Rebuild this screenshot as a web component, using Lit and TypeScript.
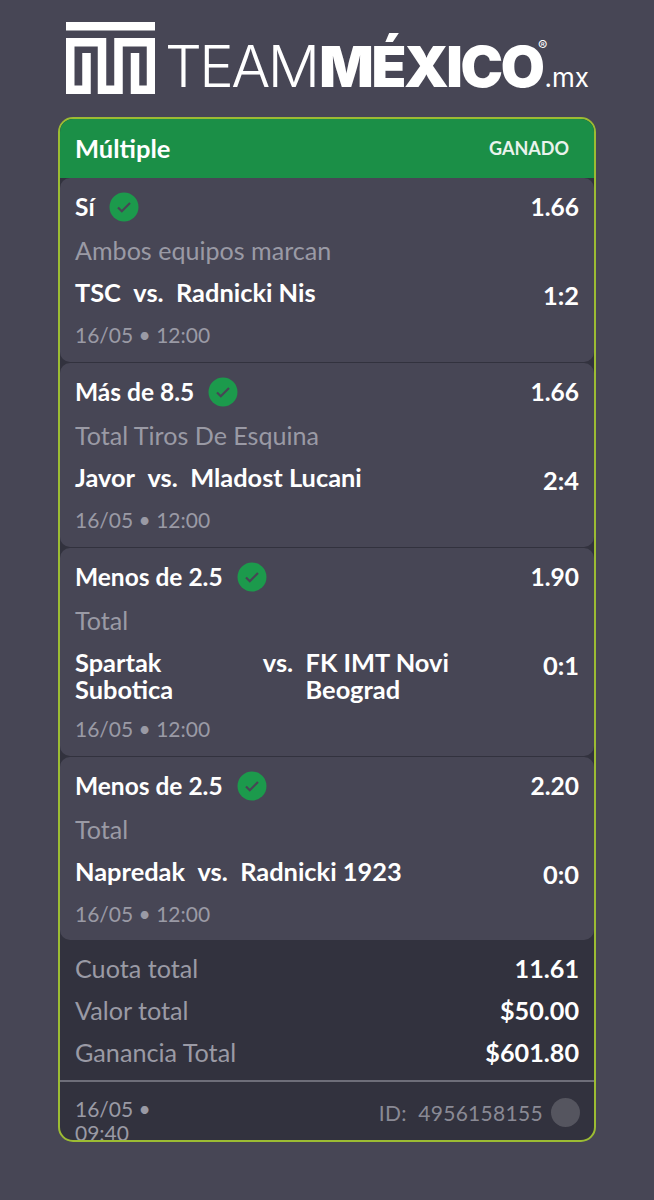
import { LitElement, html, css } from "lit";
import { customElement } from "lit/decorators.js";

interface Leg { pick: string; odds: string; market: string; home: string; away: string; score: string; }

const LEGS: Leg[] = [
  { pick: "Sí", odds: "1.66", market: "Ambos equipos marcan", home: "TSC", away: "Radnicki Nis", score: "1:2" },
  { pick: "Más de 8.5", odds: "1.66", market: "Total Tiros De Esquina", home: "Javor", away: "Mladost Lucani", score: "2:4" },
  { pick: "Menos de 2.5", odds: "1.90", market: "Total", home: "Spartak Subotica", away: "FK IMT Novi Beograd", score: "0:1" },
  { pick: "Menos de 2.5", odds: "2.20", market: "Total", home: "Napredak", away: "Radnicki 1923", score: "0:0" },
];

@customElement("app-root")
export class AppRoot extends LitElement {
  static styles = css`
    :host { display: block; width: 654px; height: 1200px; overflow: hidden; background: #474655; font-family: Lato, "Liberation Sans", sans-serif; color: #fff; }
    .logo { height: 117px; box-sizing: border-box; display: flex; align-items: flex-start; padding-left: 66px; padding-top: 22px; position: relative; }
    .logo svg { flex: none; width: 89px; height: 72px; display: block; }
    .word { display: flex; align-items: baseline; margin-left: 10px; margin-top: 14px; line-height: 60px; white-space: nowrap; font-family: Inter, Lato, sans-serif; font-size: 58px; }
    .thin { font-weight: 300; letter-spacing: -2.6px; }
    .heavy { font-weight: 900; letter-spacing: -2.4px; font-size: 57px; margin-left: 2px; }
    .mx { font-weight: 400; font-size: 26px; letter-spacing: 0; margin-left: 2px; }
    .reg { position: absolute; left: 538px; top: 38px; font-size: 14px; line-height: 16px; font-family: Inter, sans-serif; }
    .card { margin: 0 58px; box-sizing: border-box; height: 1025px; border: 2px solid #9cbc33; border-radius: 15px; overflow: hidden; background: #32323e; }
    .head { height: 59px; box-sizing: border-box; padding: 0 25px 2px 15px; background: #1b8f47; display: flex; align-items: center; justify-content: space-between; }
    .head .type { font-size: 25.5px; font-weight: 700; }
    .head .status { font-size: 18px; font-weight: 700; color: #e9f3ec; }
    .legs { display: flex; flex-direction: column; gap: 1px; }
    .leg { background: #474655; border-radius: 10px; padding: 14px 15px 13px; }
    .leg:last-child { padding-bottom: 12px; }
    .top { display: flex; justify-content: space-between; line-height: 30px; height: 30px; font-size: 24.5px; font-weight: 700; }
    .pick { display: flex; align-items: center; gap: 14px; }
    .check { width: 30px; height: 30px; flex: none; display: block; }
    .market { margin-top: 13px; line-height: 30px; font-size: 25.1px; color: #9a9aa5; }
    .match { margin-top: 14px; display: flex; justify-content: space-between; min-height: 30px; font-size: 25.4px; font-weight: 700; }
    .teams { display: flex; gap: 12.4px; line-height: 27px; width: 455px; }
    .vs { flex: none; }
    .score { height: 30px; line-height: 32px; }
    .date { margin-top: 12px; line-height: 28px; font-size: 21px; color: #9a9aa5; }
    .totals { padding-top: 7px; padding-bottom: 7px; border-bottom: 2px solid #6e6e79; }
    .row { display: flex; justify-content: space-between; line-height: 42px; padding: 0 15px; font-size: 25.2px; color: #9a9aa5; }
    .row b { color: #fff; font-weight: 700; }
    .foot { display: flex; justify-content: space-between; padding: 15px 14px 0 15px; font-size: 21px; color: #9a9aa5; }
    .fdate { width: 92px; line-height: 24px; }
    .id { display: flex; align-items: center; gap: 8px; height: 30px; color: #8a8a95; }
    .idtext { letter-spacing: 0.3px; }
    .dot { width: 29px; height: 29px; border-radius: 50%; background: #55555f; }
  `;

  private leg(l: Leg) {
    return html`<div class="leg">
      <div class="top">
        <div class="pick">${l.pick}
          <svg class="check" viewBox="0 0 30 30"><circle cx="15" cy="15" r="14.5" fill="#1c9a4c"/><path d="M9 15.5l3.8 3.8L21 11" fill="none" stroke="#474655" stroke-width="2.2"/></svg>
        </div>
        <div>${l.odds}</div>
      </div>
      <div class="market">${l.market}</div>
      <div class="match">
        <div class="teams"><span>${l.home}</span><span class="vs">vs.</span><span>${l.away}</span></div>
        <div class="score">${l.score}</div>
      </div>
      <div class="date">16/05 • 12:00</div>
    </div>`;
  }

  render() {
    return html`
      <div class="logo">
        <svg viewBox="0 0 89 72">
          <rect width="89" height="8.5" fill="#fff"/>
          <path d="M20.5 31V67.75H4.25V20.25H36V67.75H52.5V20.25H85V67.75H69V31" fill="none" stroke="#fff" stroke-width="8.5"/>
        </svg>
        <div class="word"><span class="thin">TEAM</span><span class="heavy">MÉXICO</span><span class="mx">.mx</span></div>
        <span class="reg">®</span>
      </div>
      <div class="card">
        <div class="head"><span class="type">Múltiple</span><span class="status">GANADO</span></div>
        <div class="legs">${LEGS.map((l) => this.leg(l))}</div>
        <div class="totals">
          <div class="row"><span>Cuota total</span><b>11.61</b></div>
          <div class="row"><span>Valor total</span><b>$50.00</b></div>
          <div class="row"><span>Ganancia Total</span><b>$601.80</b></div>
        </div>
        <div class="foot">
          <div class="fdate">16/05 • 09:40</div>
          <div class="id"><span class="idtext">ID:&nbsp; 4956158155</span><span class="dot"></span></div>
        </div>
      </div>
    `;
  }
}
